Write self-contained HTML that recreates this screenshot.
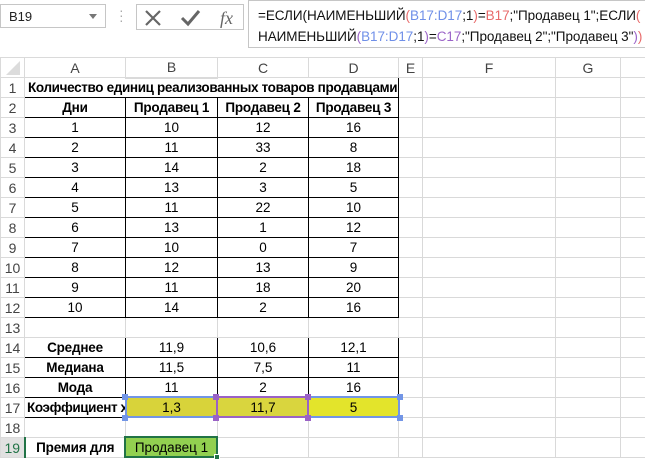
<!DOCTYPE html>
<html><head><meta charset="utf-8"><style>
*{margin:0;padding:0;box-sizing:border-box}
body{width:645px;height:460px;overflow:hidden;background:#fff;font-family:"Liberation Sans",Calibri,sans-serif;position:relative}
.fb{position:absolute;left:0;top:0;width:645px;height:57px;background:#fff}
.nb{position:absolute;left:0;top:4px;width:106px;height:24px;border:1px solid #c6c6c6;font-size:13px;padding:4px 8px;color:#222}
.nb:after{content:"";position:absolute;right:8px;top:9px;border:4px solid transparent;border-top:5px solid #777}
.dots{position:absolute;left:119px;top:8px;color:#aaa;font-size:14px;line-height:5px}
.btns{position:absolute;left:136px;top:4px;width:108px;height:26px;border:1px solid #c6c6c6}
.fx{position:absolute;left:248px;top:0;width:400px;height:48px;border:1px solid #c6c6c6;border-right:none;font-size:13.5px;letter-spacing:-0.05px;line-height:21px;padding:4px 0 0 9px;color:#111;white-space:nowrap}
.b{color:#6f8fe8}.r{color:#e86a6a}.p{color:#9b64c8}
table{position:absolute;left:0;top:57px;border-collapse:collapse;table-layout:fixed;width:650px;font-size:13.5px}
td{height:20px;border:1px solid #d9d9d9;text-align:center;white-space:nowrap;overflow:hidden;padding:0;color:#000}
tr.h td{background:#fff;color:#444;font-size:14px;border-color:#dadada}
td.rn{color:#444;background:#fff;border-color:#dadada;font-size:14px}
td.sh{background:#e1e1e1;color:#217346;border-bottom:2px solid #217346}
td.rs{background:#e1e1e1;color:#217346;border-right:2px solid #217346}
.k{border:1px solid #000}
.bold{font-weight:bold;letter-spacing:-0.2px}
</style></head><body>
<div class="fb">
<div class="nb">B19</div>
<div class="dots">·<br>·<br>·</div>
<div class="btns">
<svg width="108" height="26" style="position:absolute;left:0;top:0">
<path d="M9 6 L23 20 M23 6 L9 20" stroke="#666" stroke-width="2.2" fill="none"/>
<path d="M45 13 L51 19 L62 6" stroke="#666" stroke-width="3" fill="none"/>
<text x="83" y="19" font-family="Liberation Serif" font-style="italic" font-size="18" fill="#666">fx</text>
</svg></div>
<div class="fx">=ЕСЛИ(НАИМЕНЬШИЙ<span class="r">(</span><span class="b">B17:D17</span>;1<span class="r">)</span>=<span class="r">B17</span>;"Продавец 1";ЕСЛИ<span class="r">(</span><br>НАИМЕНЬШИЙ<span class="p">(</span><span class="b">B17:D17</span>;1<span class="p">)</span>=<span class="p">C17</span>;"Продавец 2";"Продавец 3"<span class="p">)</span><span class="r">)</span></div>
</div>
<table>
<colgroup><col style="width:24px"><col style="width:101px"><col style="width:92px"><col style="width:91px"><col style="width:90px"><col style="width:24px"><col style="width:133px"><col style="width:65px"><col style="width:30px"></colgroup>
<tr class="h"><td style="background:#fff"></td><td>A</td><td class="sh">B</td><td>C</td><td>D</td><td>E</td><td>F</td><td>G</td><td></td></tr>
<tr><td class="rn">1</td><td colspan="4" class="k bold" style="text-align:left;padding-left:3px;font-size:13.5px;letter-spacing:-0.35px">Количество единиц реализованных товаров продавцами</td><td></td><td></td><td></td><td></td></tr>
<tr><td class="rn">2</td><td class="k bold">Дни</td><td class="k bold">Продавец 1</td><td class="k bold">Продавец 2</td><td class="k bold">Продавец 3</td><td></td><td></td><td></td><td></td></tr>
<tr><td class="rn">3</td><td class="k">1</td><td class="k">10</td><td class="k">12</td><td class="k">16</td><td></td><td></td><td></td><td></td></tr>
<tr><td class="rn">4</td><td class="k">2</td><td class="k">11</td><td class="k">33</td><td class="k">8</td><td></td><td></td><td></td><td></td></tr>
<tr><td class="rn">5</td><td class="k">3</td><td class="k">14</td><td class="k">2</td><td class="k">18</td><td></td><td></td><td></td><td></td></tr>
<tr><td class="rn">6</td><td class="k">4</td><td class="k">13</td><td class="k">3</td><td class="k">5</td><td></td><td></td><td></td><td></td></tr>
<tr><td class="rn">7</td><td class="k">5</td><td class="k">11</td><td class="k">22</td><td class="k">10</td><td></td><td></td><td></td><td></td></tr>
<tr><td class="rn">8</td><td class="k">6</td><td class="k">13</td><td class="k">1</td><td class="k">12</td><td></td><td></td><td></td><td></td></tr>
<tr><td class="rn">9</td><td class="k">7</td><td class="k">10</td><td class="k">0</td><td class="k">7</td><td></td><td></td><td></td><td></td></tr>
<tr><td class="rn">10</td><td class="k">8</td><td class="k">12</td><td class="k">13</td><td class="k">9</td><td></td><td></td><td></td><td></td></tr>
<tr><td class="rn">11</td><td class="k">9</td><td class="k">11</td><td class="k">18</td><td class="k">20</td><td></td><td></td><td></td><td></td></tr>
<tr><td class="rn">12</td><td class="k">10</td><td class="k">14</td><td class="k">2</td><td class="k">16</td><td></td><td></td><td></td><td></td></tr>
<tr><td class="rn">13</td><td></td><td></td><td></td><td></td><td></td><td></td><td></td><td></td></tr>
<tr><td class="rn">14</td><td class="k bold">Среднее</td><td class="k">11,9</td><td class="k">10,6</td><td class="k">12,1</td><td></td><td></td><td></td><td></td></tr>
<tr><td class="rn">15</td><td class="k bold">Медиана</td><td class="k">11,5</td><td class="k">7,5</td><td class="k">11</td><td></td><td></td><td></td><td></td></tr>
<tr><td class="rn">16</td><td class="k bold">Мода</td><td class="k">11</td><td class="k">2</td><td class="k">16</td><td></td><td></td><td></td><td></td></tr>
<tr><td class="rn">17</td><td class="k bold" style="text-align:left;padding-left:2px;letter-spacing:-0.4px">Коэффициент х</td><td class="k" style="background:#d8d33a">1,3</td><td class="k" style="background:#d9d53e">11,7</td><td class="k" style="background:#e3e42b">5</td><td></td><td></td><td></td><td></td></tr>
<tr><td class="rn">18</td><td></td><td></td><td></td><td></td><td></td><td></td><td></td><td></td></tr>
<tr><td class="rn rs">19</td><td class="bold">Премия для</td><td style="background:#92d050">Продавец 1</td><td></td><td></td><td></td><td></td><td></td><td></td></tr>
</table>
<div style="position:absolute;left:125px;top:396px;width:275px;height:22px;border:2px solid #7295e6"></div>
<div style="position:absolute;left:216px;top:396px;width:93px;height:22px;border:2px solid #9a62c6"></div>
<div style="position:absolute;left:124px;top:436px;width:94px;height:22px;border:2px solid #217346"></div>
<div style="position:absolute;left:214px;top:454px;width:6px;height:6px;background:#217346;border:1px solid #fff"></div>
<div style="position:absolute;left:122px;top:394px;width:6px;height:6px;background:#7295e6"></div>
<div style="position:absolute;left:122px;top:415px;width:6px;height:6px;background:#7295e6"></div>
<div style="position:absolute;left:397px;top:394px;width:6px;height:6px;background:#7295e6"></div>
<div style="position:absolute;left:397px;top:415px;width:6px;height:6px;background:#7295e6"></div>
<div style="position:absolute;left:213px;top:394px;width:6px;height:6px;background:#9a62c6"></div>
<div style="position:absolute;left:213px;top:415px;width:6px;height:6px;background:#9a62c6"></div>
<div style="position:absolute;left:305px;top:394px;width:6px;height:6px;background:#9a62c6"></div>
<div style="position:absolute;left:305px;top:415px;width:6px;height:6px;background:#9a62c6"></div>
<div style="position:absolute;width:0;height:0;border-left:14px solid transparent;border-bottom:14px solid #dcdcdc;left:6px;top:61px"></div>
</body></html>
